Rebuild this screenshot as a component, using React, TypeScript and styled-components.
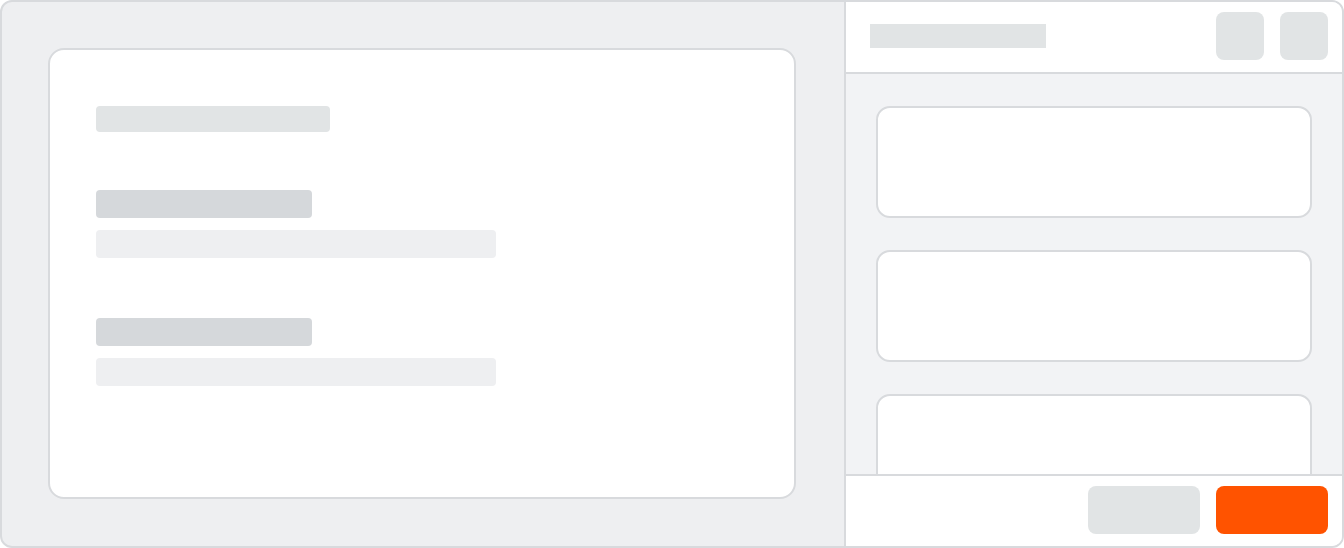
import React from 'react';
import styled, { createGlobalStyle } from 'styled-components';

const GlobalStyle = createGlobalStyle`
  html, body {
    margin: 0;
    padding: 0;
    background: #ffffff;
    font-family: 'Inter', 'Liberation Sans', sans-serif;
  }
  * {
    box-sizing: border-box;
  }
`;

const StyledFrame = styled.div`
  width: 1344px;
  height: 548px;
  border: 2px solid #d8dadd;
  border-radius: 12px;
  overflow: hidden;
  display: flex;
  flex-direction: row;
  background-color: #eeeff1;
`;

const StyledCanvas = styled.div`
  flex: 1;
  padding: 46px 48px 47px 46px;
  display: flex;
`;

const StyledCard = styled.div`
  flex: 1;
  background-color: #fff;
  border: 2px solid #d8dadd;
  border-radius: 16px;
  padding: 56px 46px 0;
  display: flex;
  flex-direction: column;
  align-items: flex-start;
`;

const StyledTitleBar = styled.div`
  flex-shrink: 0;
  width: 234px;
  height: 26px;
  border-radius: 4px;
  background-color: #e1e4e5;
  margin-bottom: 58px;
`;

const StyledField = styled.div`
  flex-shrink: 0;
  display: flex;
  flex-direction: column;
  gap: 12px;
  & + & {
    margin-top: 60px;
  }
`;

const StyledBar = styled.div<Props>`
  flex-shrink: 0;
  height: 28px;
  border-radius: 4px;
  width: ${props => props.width};
  background-color: ${props => props.color};
`;

interface Props {
  width: string;
  color: string;
}

const StyledPanel = styled.div`
  width: 498px;
  border-left: 2px solid #d8dadd;
  display: flex;
  flex-direction: column;
  background-color: #f2f3f5;
`;

const StyledHeader = styled.div`
  height: 72px;
  flex-shrink: 0;
  background-color: #fff;
  border-bottom: 2px solid #d8dadd;
  display: flex;
  align-items: center;
  padding: 0 14px 0 24px;
  gap: 16px;
`;

const StyledHeading = styled.div`
  width: 176px;
  height: 24px;
  background-color: #e1e4e5;
  margin-right: auto;
  margin-top: -2px;
`;

const StyledIconButton = styled.div`
  width: 48px;
  height: 48px;
  border-radius: 8px;
  background-color: #e1e4e5;
  margin-top: -2px;
`;

const StyledList = styled.div`
  flex: 1;
  overflow: hidden;
  padding: 32px 30px 0;
  display: flex;
  flex-direction: column;
  gap: 32px;
`;

const StyledListCard = styled.div`
  flex-shrink: 0;
  height: 112px;
  background-color: #fff;
  border: 2px solid #d8dadd;
  border-radius: 14px;
`;

const StyledFooter = styled.div`
  height: 72px;
  flex-shrink: 0;
  background-color: #fff;
  border-top: 2px solid #d8dadd;
  display: flex;
  align-items: center;
  justify-content: flex-end;
  gap: 16px;
  padding: 0 14px 2px;
`;

const StyledButton = styled.div<{ primary?: boolean }>`
  width: 112px;
  height: 48px;
  border-radius: 8px;
  background-color: ${props => (props.primary ? '#ff5300' : '#e1e4e5')};
`;

export default function App() {
  return (
    <>
      <GlobalStyle />
      <StyledFrame>
        <StyledCanvas>
          <StyledCard>
            <StyledTitleBar />
            <StyledField>
              <StyledBar width="216px" color="#d5d8db" />
              <StyledBar width="400px" color="#eeeff1" />
            </StyledField>
            <StyledField>
              <StyledBar width="216px" color="#d5d8db" />
              <StyledBar width="400px" color="#eeeff1" />
            </StyledField>
          </StyledCard>
        </StyledCanvas>
        <StyledPanel>
          <StyledHeader>
            <StyledHeading />
            <StyledIconButton />
            <StyledIconButton />
          </StyledHeader>
          <StyledList>
            <StyledListCard />
            <StyledListCard />
            <StyledListCard />
          </StyledList>
          <StyledFooter>
            <StyledButton />
            <StyledButton primary />
          </StyledFooter>
        </StyledPanel>
      </StyledFrame>
    </>
  );
}
